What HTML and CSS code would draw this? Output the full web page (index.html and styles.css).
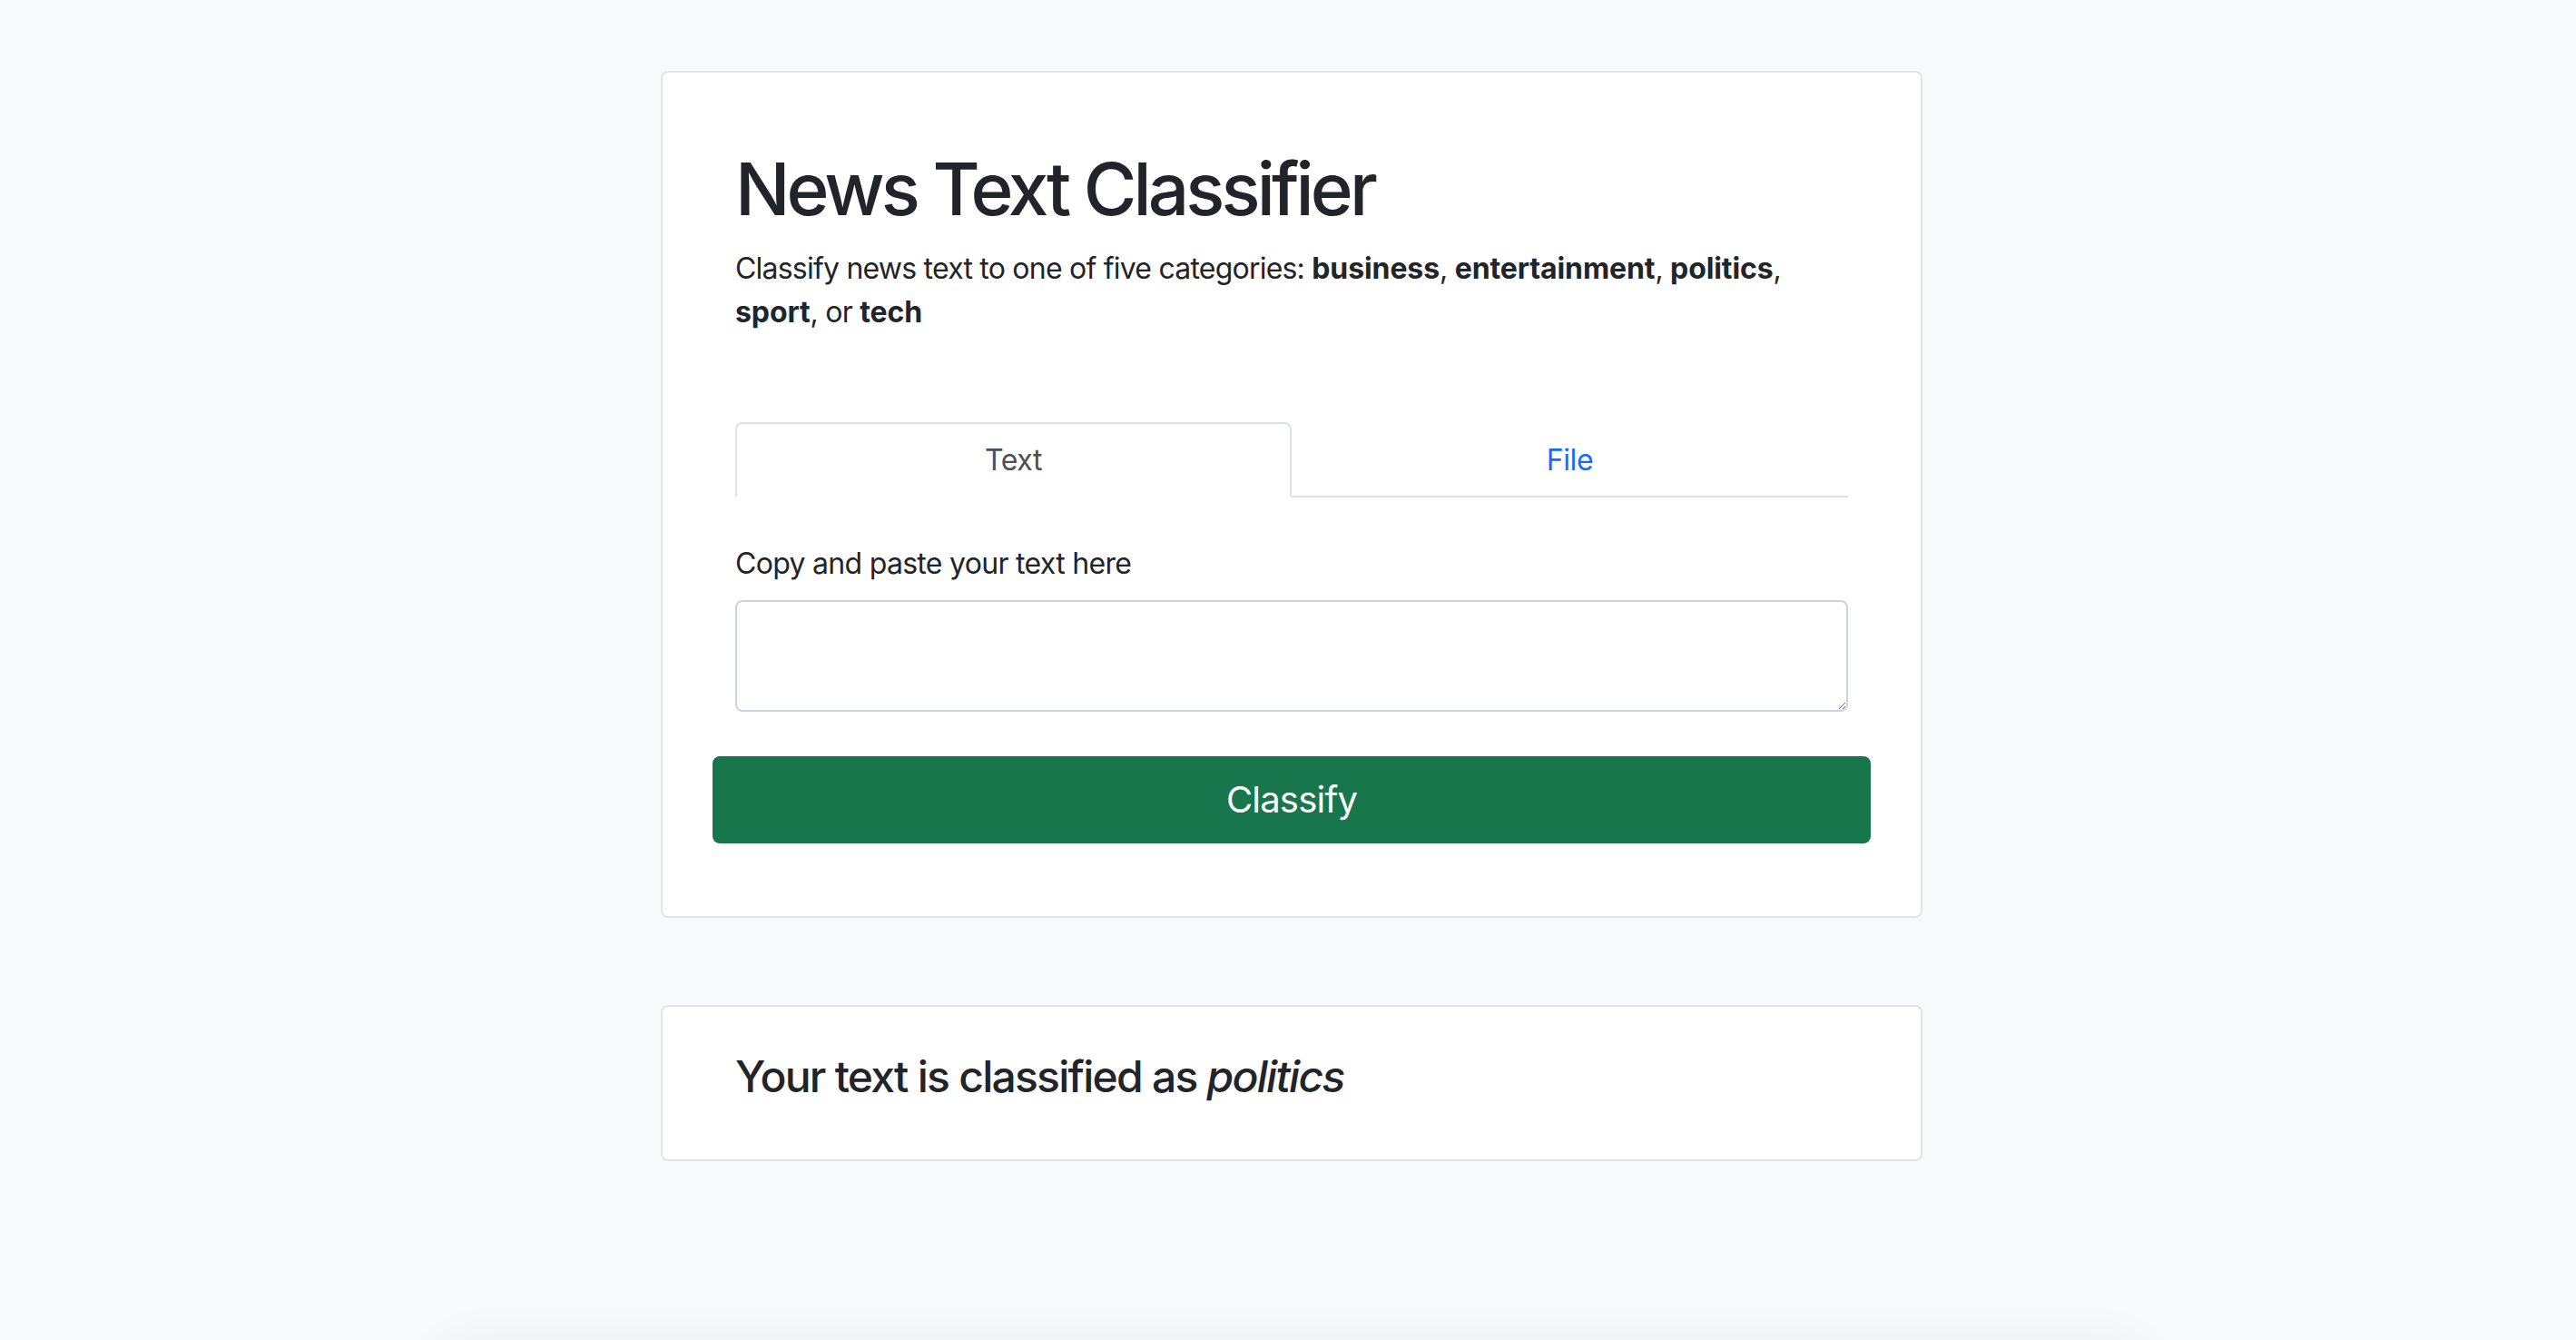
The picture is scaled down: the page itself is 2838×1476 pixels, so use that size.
FILE: index.html
```html
<!DOCTYPE html>
<html lang="en">
<head>
<meta charset="utf-8">
<title>News Text Classifier</title>
<link rel="stylesheet" href="styles.css">
</head>
<body>
<main class="page">
  <section class="card main-card">
    <h1 class="title">News Text Classifier</h1>
    <p class="lead">Classify news text to one of five categories: <b>business</b>, <b>entertainment</b>, <b>politics</b>, <b>sport</b>, or <b>tech</b></p>
    <nav class="tabs">
      <a class="tab active">Text</a>
      <a class="tab">File</a>
    </nav>
    <label class="label" for="txt">Copy and paste your text here</label>
    <textarea id="txt" class="input" rows="2"></textarea>
    <button class="btn">Classify</button>
  </section>
  <section class="card result-card">
    <h4 class="result">Your text is classified as <i>politics</i></h4>
  </section>
  <div class="footer-shadow"></div>
</main>
</body>
</html>
```

FILE: styles.css
```css
* { box-sizing: border-box; }
html, body { margin: 0; padding: 0; }
body {
  background: #f8f9fa;
  font-family: Inter, "Noto Sans", sans-serif;
  color: #212529;
  font-size: 32px;
  line-height: 48px;
  overflow: hidden;
  height: 1476px;
}
.page {
  display: flex;
  flex-direction: column;
  align-items: center;
  padding: 78px 0 0 8px;
}
.card {
  width: 1390px;
  background: #fff;
  border: 2px solid #e3e4e6;
  border-radius: 8px;
  padding: 80px;
  display: flex;
  flex-direction: column;
}
.title {
  margin: 0 0 16px;
  font-size: 80px;
  line-height: 96px;
  font-weight: 500;
  letter-spacing: -3.9px;
}
.lead {
  margin: 0 0 97px;
  font-size: 32px;
  line-height: 48px;
  letter-spacing: -0.78px;
}
.lead b { font-weight: 700; letter-spacing: -0.1px; }
.tabs {
  display: flex;
  border-bottom: 2px solid #dee2e6;
  margin-bottom: 49px;
}
.tab {
  flex: 1;
  text-align: center;
  height: 83px;
  line-height: 48px;
  padding: 16px 32px;
  border: 2px solid transparent;
  border-radius: 8px 8px 0 0;
  margin-bottom: -2px;
  color: #0d6efd;
  letter-spacing: -0.4px;
}
.tab.active {
  color: #495057;
  background: #fff;
  border-color: #dee2e6 #dee2e6 #fff;
}
.label {
  display: block;
  margin-bottom: 16px;
  letter-spacing: -0.7px;
}
.input {
  display: block;
  width: 100%;
  height: 123px;
  border: 2px solid #ced4da;
  border-radius: 8px;
  padding: 12px 24px;
  font: inherit;
  resize: vertical;
  margin-bottom: 49px;
}
.btn {
  margin: 0 -25px;
  height: 96px;
  background: #17764b;
  color: #fff;
  border: 2px solid #17764b;
  border-radius: 8px;
  font-family: inherit;
  font-size: 40px;
  line-height: 60px;
  letter-spacing: -0.8px;
}
.result-card {
  margin-top: 96px;
  padding: 48px 80px 46px;
}
.result {
  margin: 0 0 16px;
  font-size: 48px;
  line-height: 58px;
  font-weight: 500;
  letter-spacing: -1.75px;
}
.result i { font-style: italic; }
.footer-shadow {
  margin-top: 210px;
  width: 1860px;
  height: 200px;
  background: #f8f9fa;
  box-shadow: 0 0 60px rgba(0, 0, 0, 0.07);
}
```
